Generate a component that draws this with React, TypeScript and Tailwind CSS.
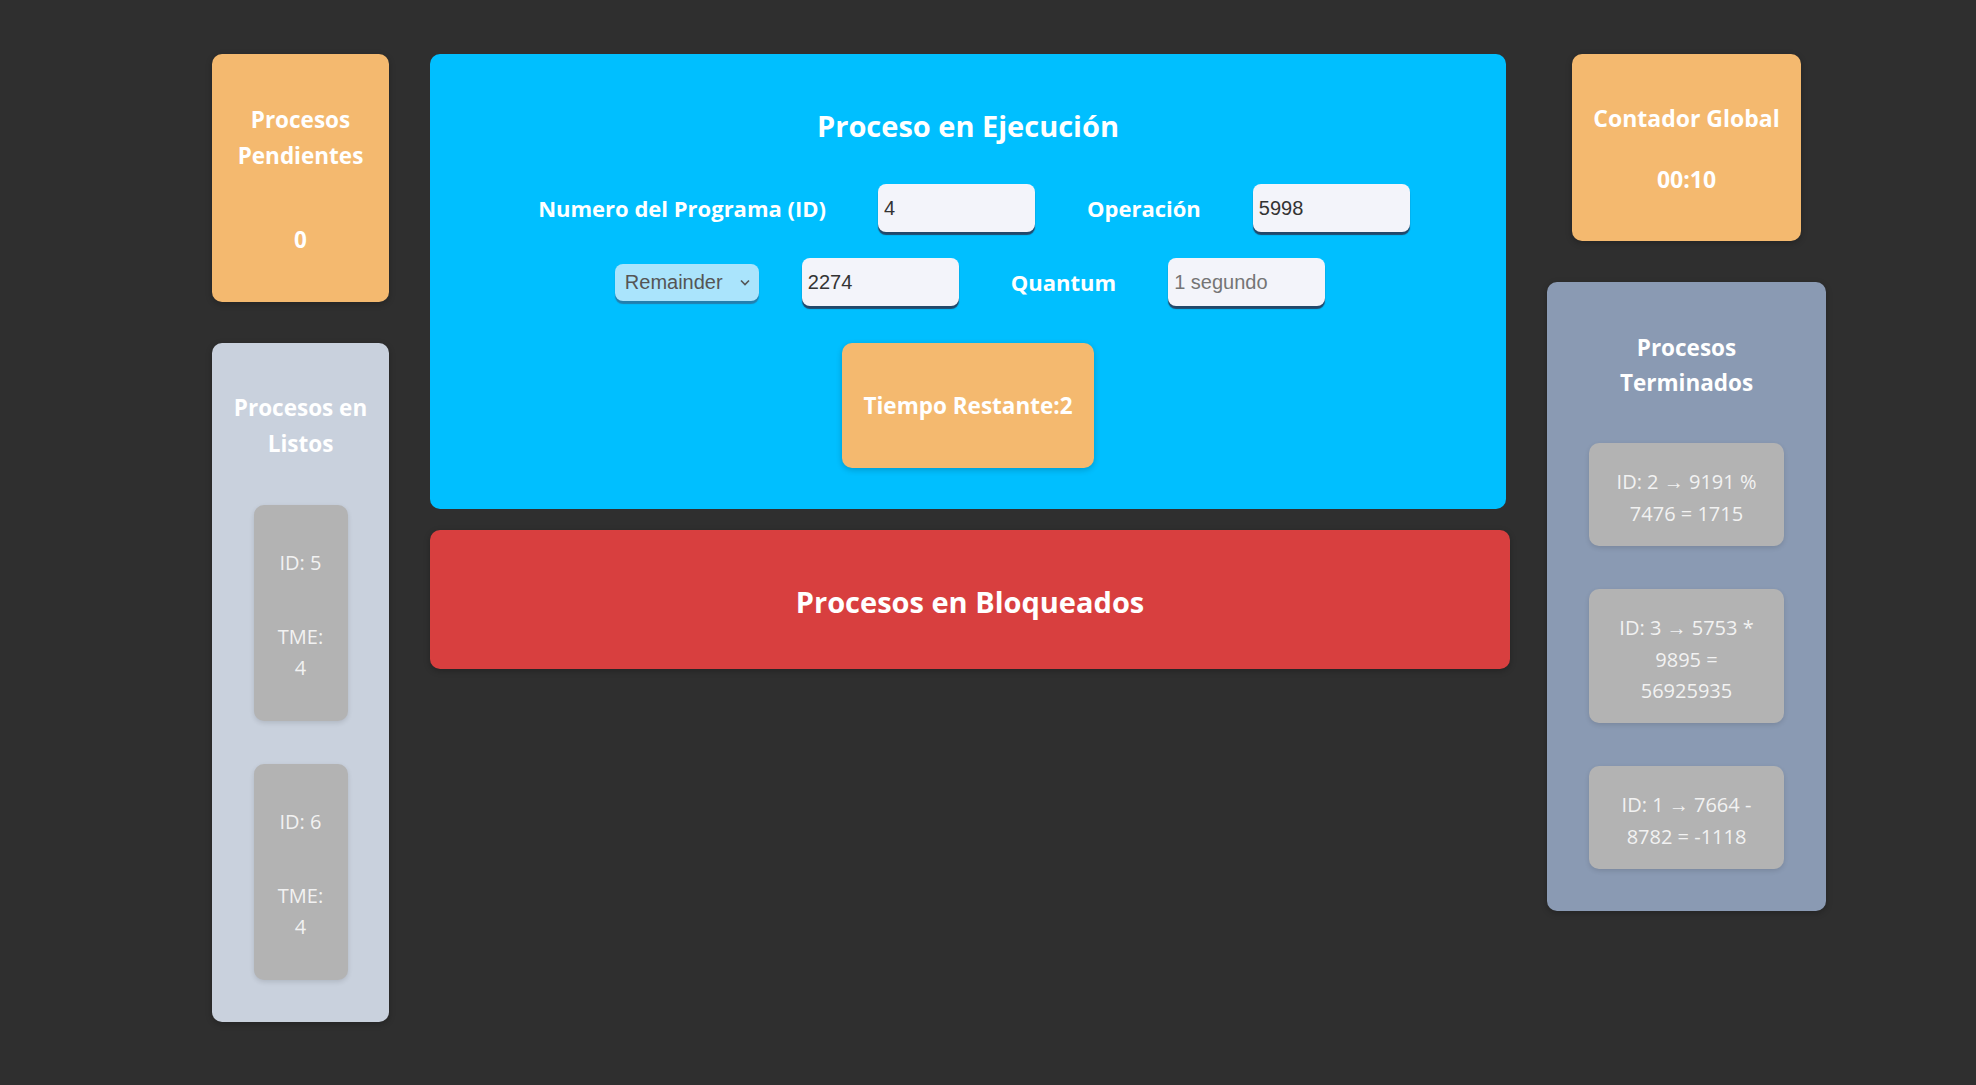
import React from "react";

function Arrow() {
  return <span className="font-['Liberation_Sans',Arial,sans-serif]">→</span>;
}

function ListCard({ id, tme }: { id: number; tme: number }) {
  return (
    <div className="flex h-[216px] w-[94px] flex-col items-center justify-center rounded-[10px] bg-[#b3b3b3] pt-[4px] text-center text-[20px] leading-[31px] text-[#f2f2f2] shadow-[0_2px_5px_rgba(0,0,0,0.12)]">
      <p>ID: {id}</p>
      <p className="mt-[43px]">
        TME:
        <br />
        {tme}
      </p>
    </div>
  );
}

function DoneCard({ id, lines }: { id: number; lines: string[] }) {
  return (
    <div className="w-[195px] rounded-[10px] bg-[#b3b3b3] px-[4px] pb-[17px] pt-[23px] text-center text-[20px] leading-[31px] text-[#f2f2f2] shadow-[0_2px_5px_rgba(0,0,0,0.12)]">
      {lines.map((l, i) => (
        <span key={i} className="block whitespace-nowrap">
          {i === 0 ? (
            <>
              ID: {id} <Arrow /> {l}
            </>
          ) : (
            l
          )}
        </span>
      ))}
    </div>
  );
}

const inputCls =
  "h-[48px] w-[157px] rounded-[8px] bg-[#f3f4fa] pl-[6px] font-['Liberation_Sans',Arial,sans-serif] text-[20px] text-[#333333] outline-none shadow-[0_3px_1px_rgba(40,50,80,0.85)] placeholder:text-[#757575]";

export default function App() {
  return (
    <div className="min-h-screen w-full bg-[#2f2f2f] font-['Open_Sans','Noto_Sans',sans-serif]">
      <div className="flex items-start pl-[212px] pt-[54px]">
        {/* Left column */}
        <div className="flex w-[177px] flex-col gap-[41px]">
          <div className="flex h-[248px] flex-col items-center rounded-[10px] bg-[#f4b96f] pt-[48px] text-center text-[22.5px] font-bold leading-[36px] text-white shadow-[0_2px_6px_rgba(0,0,0,0.25)]">
            <h3>
              Procesos
              <br />
              Pendientes
            </h3>
            <p className="mt-[48px]">0</p>
          </div>
          <div className="flex h-[679px] flex-col items-center rounded-[10px] bg-[#c9d1dd] pt-[47px] text-center shadow-[0_2px_6px_rgba(0,0,0,0.25)]">
            <h3 className="text-[22.5px] font-bold leading-[36px] text-white">
              Procesos en
              <br />
              Listos
            </h3>
            <div className="mt-[43px] flex flex-col gap-[43px]">
              <ListCard id={5} tme={4} />
              <ListCard id={6} tme={4} />
            </div>
          </div>
        </div>

        {/* Center column */}
        <div className="ml-[41px] flex w-[1080px] flex-col gap-[21px]">
          <div className="flex h-[455px] w-[1076px] flex-col items-center rounded-[10px] bg-[#00bfff] pt-[50px] text-white">
            <h2 className="text-[29px] font-bold leading-[43px]">Proceso en Ejecución</h2>
            <div className="mt-[37px] flex items-center justify-center gap-[52px] pl-[12px]">
              <label className="text-[22px] font-bold">Numero del Programa (ID)</label>
              <input className={inputCls} defaultValue="4" readOnly />
              <label className="text-[22px] font-bold">Operación</label>
              <input className={inputCls} defaultValue="5998" readOnly />
            </div>
            <div className="mt-[26px] flex items-center justify-center pl-[4px]">
              <div className="relative">
                <select
                  className="h-[37px] w-[144px] appearance-none rounded-[8px] bg-[#aae4fc] pl-[10px] font-['Liberation_Sans',Arial,sans-serif] text-[20px] text-[#555555] outline-none shadow-[0_3px_1px_rgba(50,100,140,0.7)]"
                  defaultValue="Remainder"
                >
                  <option>Remainder</option>
                  <option>Suma</option>
                  <option>Resta</option>
                </select>
                <svg
                  className="pointer-events-none absolute right-[9px] top-[15px]"
                  width="10"
                  height="7"
                  viewBox="0 0 10 7"
                  fill="none"
                >
                  <path d="M1 1.5 L5 5.5 L9 1.5" stroke="#555" strokeWidth="1.6" />
                </svg>
              </div>
              <input className={`${inputCls} ml-[43px]`} defaultValue="2274" readOnly />
              <label className="ml-[52px] text-[22px] font-bold">Quantum</label>
              <input className={`${inputCls} ml-[52px]`} placeholder="1 segundo" readOnly />
            </div>
            <div className="mt-[37px] flex h-[125px] w-[252px] items-center justify-center rounded-[10px] bg-[#f4b96f] text-[22.5px] font-bold text-white shadow-[0_2px_6px_rgba(0,0,0,0.2)]">
              Tiempo Restante:2
            </div>
          </div>
          <div className="flex h-[139px] w-[1080px] items-center justify-center rounded-[10px] bg-[#d83f3f] pt-[4px] text-[29px] font-bold text-white shadow-[0_2px_6px_rgba(0,0,0,0.25)]">
            Procesos en Bloqueados
          </div>
        </div>

        {/* Right column */}
        <div className="ml-[37px] flex w-[279px] flex-col items-center gap-[41px]">
          <div className="flex h-[187px] w-[229px] flex-col items-center rounded-[10px] bg-[#f4b96f] pt-[46px] text-center text-[23px] font-bold leading-[36px] text-white shadow-[0_2px_6px_rgba(0,0,0,0.25)]">
            <h3>Contador Global</h3>
            <p className="mt-[25px]">00:10</p>
          </div>
          <div className="flex h-[629px] w-[279px] flex-col items-center rounded-[10px] bg-[#8a9ab3] pt-[48px] text-center shadow-[0_2px_6px_rgba(0,0,0,0.25)]">
            <h3 className="text-[22.5px] font-bold leading-[35px] text-white">
              Procesos
              <br />
              Terminados
            </h3>
            <div className="mt-[43px] flex flex-col gap-[43px]">
              <DoneCard id={2} lines={["9191 %", "7476 = 1715"]} />
              <DoneCard id={3} lines={["5753 *", "9895 =", "56925935"]} />
              <DoneCard id={1} lines={["7664 -", "8782 = -1118"]} />
            </div>
          </div>
        </div>
      </div>
    </div>
  );
}
